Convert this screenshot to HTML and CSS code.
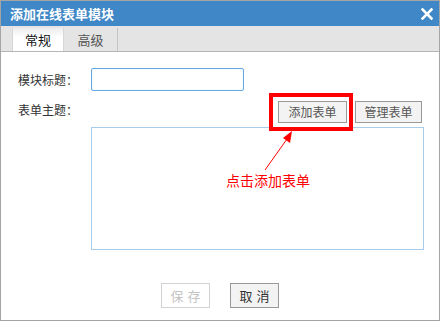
FILE: index.html
```html
<!DOCTYPE html>
<html lang="zh-CN">
  <head>
    <meta charset="UTF-8" />
    <title>添加在线表单模块</title>
    <link rel="stylesheet" href="styles.css">
  </head>
  <body>
    <div class="dialog">
      <div class="titlebar">
        <span class="title">添加在线表单模块</span>
        <svg class="close" width="12" height="12" viewBox="0 0 12 12">
          <path d="M1.5 1.5 L10.5 10.5 M10.5 1.5 L1.5 10.5" stroke="#fff" stroke-width="2.6" stroke-linecap="square" />
        </svg>
      </div>

      <div class="tabs">
        <div class="tab active">常规</div>
        <div class="tab">高级</div>
      </div>

      <div class="form">
        <label class="label">模块标题：</label>
        <input class="text-input" type="text" />

        <label class="label label-top">表单主题：</label>
        <div class="toolbar">
          <button class="button">添加表单</button>
          <button class="button button-narrow">管理表单</button>
        </div>

        <span></span>
        <div class="form-box"></div>
      </div>

      <div class="footer">
        <button class="button footer-button" disabled>保存</button>
        <button class="button footer-button">取消</button>
      </div>

      <!-- annotation -->
      <div class="highlight"></div>
      <svg class="arrow" width="440" height="321" viewBox="0 0 440 321">
        <line x1="265" y1="170" x2="287" y2="139" stroke="#f00" stroke-width="1" />
        <polygon points="292,131 290,143 283,138" fill="#f00" />
      </svg>
      <div class="note">点击添加表单</div>
    </div>
  </body>
</html>
```

FILE: styles.css
```css
body {
  margin: 0;
  font-family: "Noto Sans CJK SC", "Liberation Sans", sans-serif;
  background: #fff;
}

.dialog {
  position: relative;
  width: 440px;
  height: 321px;
  box-sizing: border-box;
  border: 1px solid #a5a5a5;
  background: #fff;
}

.titlebar {
  display: flex;
  align-items: center;
  justify-content: space-between;
  height: 25px;
  padding: 0 6px 0 9px;
  background-color: #3f87c6;
  color: #fff;
}

.title {
  font-size: 13px;
  font-weight: bold;
  line-height: 25px;
}

.close {
  display: block;
}

.tabs {
  display: flex;
  align-items: flex-end;
  height: 25px;
  padding-left: 11px;
  background-color: #e4e4e4;
  border-bottom: 1px solid #b6b6b6;
}

.tab {
  width: 54px;
  height: 23px;
  box-sizing: border-box;
  border-right: 1px solid #c4c4c4;
  font-size: 13px;
  line-height: 23px;
  text-align: center;
  color: #555;
}

.tab.active {
  width: 52px;
  border-left: 1px solid #d6d6d6;
  border-right: 1px solid #d6d6d6;
  background: linear-gradient(#ececec, #fff 40%);
  color: #111;
}

.form {
  display: grid;
  grid-template-columns: 73px 1fr;
  padding: 16px 15px 0 17px;
}

.label {
  align-self: center;
  font-size: 12px;
  color: #333;
}

.label-top {
  align-self: start;
  padding-top: 10px;
}

.text-input {
  width: 153px;
  height: 23px;
  box-sizing: border-box;
  margin: 0;
  border: 1px solid #63a9e6;
  border-radius: 2px;
  box-shadow: inset 0 0 1px #b6d8f5;
  outline: none;
}

.toolbar {
  display: flex;
  justify-content: flex-end;
  gap: 8px;
  margin-top: 10px;
  padding-right: 2px;
}

.button {
  width: 69px;
  height: 22px;
  box-sizing: border-box;
  margin: 0;
  padding: 0;
  border: 1px solid #999;
  background-color: #f3f3f3;
  font-family: inherit;
  font-size: 12px;
  line-height: 20px;
  color: #555;
}

.button-narrow {
  width: 67px;
}

.form-box {
  height: 121px;
  margin-top: 4px;
  border: 1px solid #a8cdec;
}

.footer {
  display: flex;
  justify-content: center;
  gap: 20px;
  margin-top: 33px;
}

.footer-button {
  width: 49px;
  height: 25px;
  font-size: 13px;
  letter-spacing: 4px;
  padding-left: 4px;
  line-height: 23px;
  color: #333;
}

.footer-button:disabled {
  border-color: #d2d2d2;
  background-color: #fff;
  color: #c4c4c4;
}

.highlight {
  position: absolute;
  left: 268px;
  top: 92px;
  width: 84px;
  height: 38px;
  box-sizing: border-box;
  border: 4px solid #f00;
}

.arrow {
  position: absolute;
  left: -1px;
  top: -1px;
}

.note {
  position: absolute;
  left: 225px;
  top: 171px;
  font-size: 14px;
  line-height: 16px;
  color: #f00;
}
```
